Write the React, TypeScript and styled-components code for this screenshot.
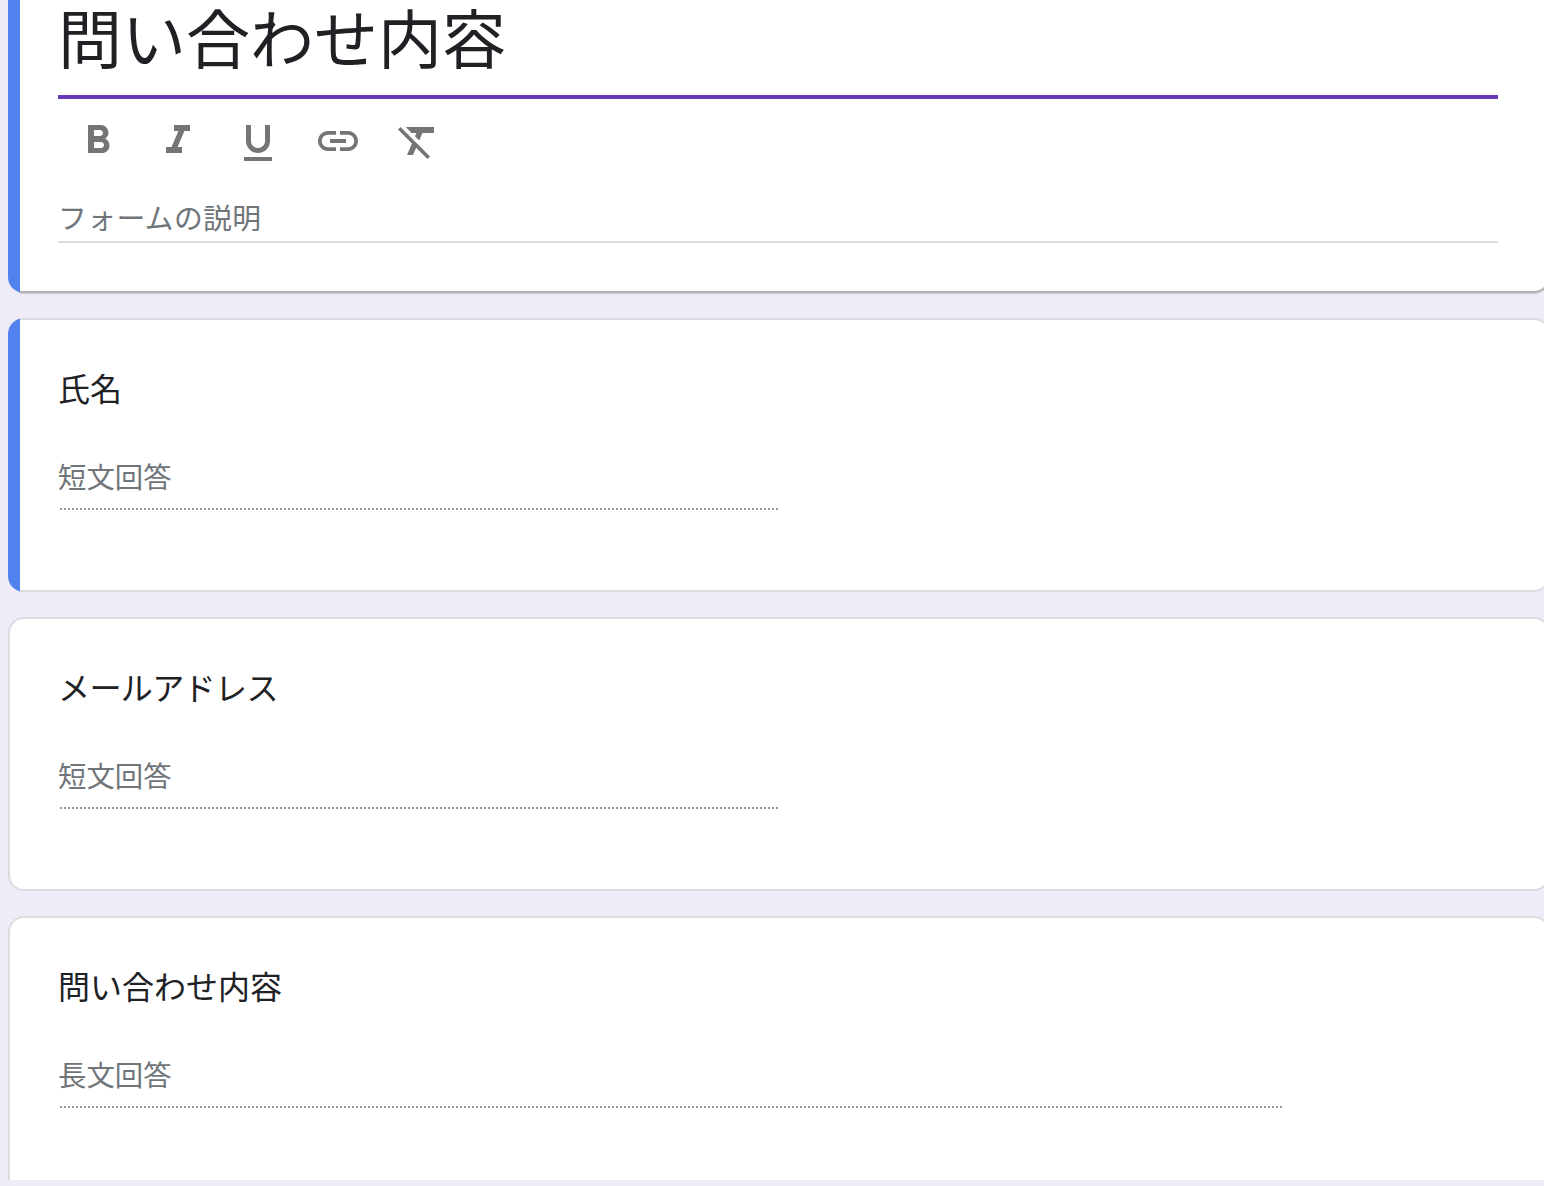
import { createGlobalStyle, styled } from "styled-components";

const GlobalStyle = createGlobalStyle`
  html, body {
    margin: 0;
    height: 100%;
    overflow: hidden;
    background-color: #efebf7;
  }
  body {
    font-family: "Noto Sans CJK JP", "Noto Sans", sans-serif;
    color: #202124;
  }
`;

const SPage = styled.div`
  display: flex;
  flex-direction: column;
  gap: 25px;
  width: 1542px;
  height: 1186px;
  padding-left: 8px;
  overflow: hidden;
`;

const SCard = styled.section<{ $active?: boolean; $height: number; $head?: boolean; $cut?: boolean }>`
  flex: none;
  display: flex;
  box-sizing: border-box;
  height: ${(p) => p.$height}px;
  padding-left: ${(p) => (p.$active ? 12 : 0)}px;
  background: ${(p) => (p.$active ? "linear-gradient(to right, #5282f0 12px, transparent 12px)" : "none")};
  border-radius: ${(p) => (p.$head ? "0 0 16px 16px" : p.$cut ? "16px 16px 0 0" : "16px")};
`;

const SCardBody = styled.div<{ $active?: boolean; $head?: boolean; $cut?: boolean }>`
  flex: 1;
  box-sizing: border-box;
  padding-left: ${(p) => (p.$active ? 38 : 48)}px;
  background-color: #fff;
  border: 2px solid #dadce0;
  border-left-width: ${(p) => (p.$active ? 0 : 2)}px;
  border-top-width: ${(p) => (p.$head ? 0 : 2)}px;
  border-bottom-width: ${(p) => (p.$cut ? 0 : 2)}px;
  border-radius: ${(p) => {
    if (p.$head) return "0 0 16px 0";
    if (p.$active) return "0 16px 16px 0";
    return p.$cut ? "16px 16px 0 0" : "16px";
  }};
  ${(p) => p.$head && "border-bottom-color: #b4b4b6; box-shadow: 0 1px 1px rgba(60, 64, 67, 0.2);"}
`;

const SHeadInner = styled.div`
  width: 1440px;
`;

const STitle = styled.h1`
  margin: 0;
  height: 95px;
  font-size: 64px;
  font-weight: 400;
  line-height: 70px;
  color: #202124;
`;

const SFocusLine = styled.div`
  height: 4px;
  background-color: #673ab7;
`;

const SToolbar = styled.div`
  display: flex;
  gap: 32px;
  height: 48px;
  margin-top: 18px;
  padding-left: 16px;
`;

const SToolIcon = styled.svg`
  width: 48px;
  height: 48px;
  fill: #757575;
`;

const SDescription = styled.div`
  box-sizing: border-box;
  height: 46px;
  margin-top: 32px;
  border-bottom: 2px solid #dadce0;
  font-size: 28.8px;
  line-height: 40px;
  letter-spacing: 0.4px;
  color: #70757a;
`;

const SQuestion = styled.div<{ $tight?: boolean }>`
  padding-top: 45px;
  font-size: 32px;
  line-height: 44px;
  letter-spacing: ${(p) => (p.$tight ? "-0.6px" : "0")};
  color: #202124;
`;

const SAnswer = styled.div<{ $long?: boolean }>`
  box-sizing: border-box;
  width: ${(p) => (p.$long ? 1224 : 720)}px;
  height: 81px;
  margin-top: 20px;
  padding-top: 27px;
  background: repeating-linear-gradient(to left, #979797 0 2px, transparent 2px 4px) bottom / 100% 2px no-repeat;
  font-size: 28.4px;
  line-height: 40px;
  color: #70757a;
`;

const toolPaths = [
  "M15.6 10.79c.97-.67 1.65-1.77 1.65-2.79 0-2.26-1.75-4-4-4H7v14h7.04c2.09 0 3.71-1.7 3.71-3.79 0-1.52-.86-2.82-2.15-3.42zM10 6.5h3c.83 0 1.5.67 1.5 1.5s-.67 1.5-1.5 1.5h-3v-3zm3.5 9H10v-3h3.5c.83 0 1.5.67 1.5 1.5s-.67 1.5-1.5 1.5z",
  "M10 4v3h2.21l-3.42 8H6v3h8v-3h-2.21l3.42-8H18V4z",
  "M12 18c3.31 0 6-2.69 6-6V4h-2.5v8c0 1.93-1.57 3.5-3.5 3.5S8.5 13.93 8.5 12V4H6v8c0 3.31 2.69 6 6 6zm-7 2v2h14v-2H5z",
  "M3.9 12c0-1.71 1.39-3.1 3.1-3.1h4V7H7c-2.76 0-5 2.24-5 5s2.24 5 5 5h4v-1.9H7c-1.71 0-3.1-1.39-3.1-3.1zM8 13h8v-2H8v2zm9-6h-4v1.9h4c1.71 0 3.1 1.39 3.1 3.1s-1.39 3.1-3.1 3.1h-4V17h4c2.76 0 5-2.24 5-5s-2.24-5-5-5z",
  "M3.27 5L2 6.27l6.97 6.97L6.5 19h3l1.57-3.66L16.73 21 18 19.73 3.55 5.27 3.27 5zM6 5v.18L8.82 8h2.4l-.72 1.68 2.1 2.1L14.21 8H20V5H6z",
];

export default function App() {
  return (
    <SPage>
      <GlobalStyle />
      <SCard $active $head $height={293}>
        <SCardBody $active $head>
          <SHeadInner>
            <STitle>問い合わせ内容</STitle>
            <SFocusLine />
            <SToolbar>
              {toolPaths.map((d) => (
                <SToolIcon key={d} viewBox="0 0 24 24">
                  <path d={d} />
                </SToolIcon>
              ))}
            </SToolbar>
            <SDescription>フォームの説明</SDescription>
          </SHeadInner>
        </SCardBody>
      </SCard>
      <SCard $active $height={274}>
        <SCardBody $active>
          <SQuestion>氏名</SQuestion>
          <SAnswer>短文回答</SAnswer>
        </SCardBody>
      </SCard>
      <SCard $height={274}>
        <SCardBody>
          <SQuestion $tight>メールアドレス</SQuestion>
          <SAnswer>短文回答</SAnswer>
        </SCardBody>
      </SCard>
      <SCard $cut $height={264}>
        <SCardBody $cut>
          <SQuestion>問い合わせ内容</SQuestion>
          <SAnswer $long>長文回答</SAnswer>
        </SCardBody>
      </SCard>
    </SPage>
  );
}
